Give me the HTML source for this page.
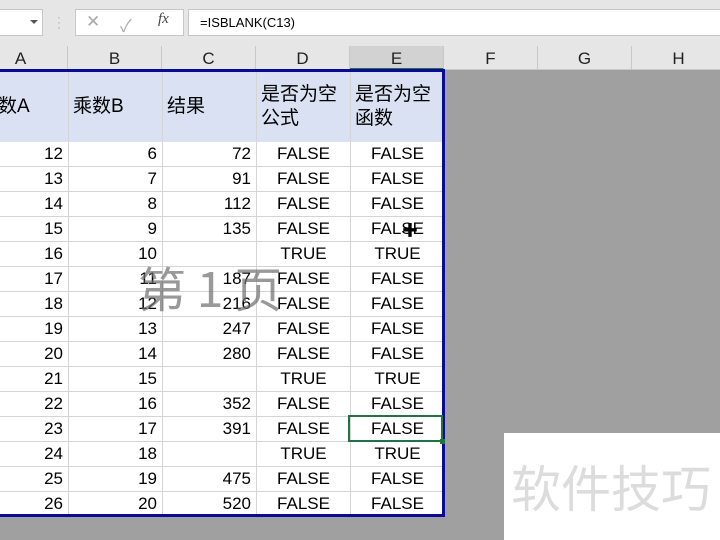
<!DOCTYPE html>
<html><head><meta charset="utf-8"><style>
*{margin:0;padding:0;box-sizing:border-box}
body{width:720px;height:540px;overflow:hidden;background:#a0a0a0;position:relative;font-family:"Liberation Sans","Noto Sans CJK SC",sans-serif;color:#000}
.a{position:absolute}
#bar{left:0;top:0;width:720px;height:46px;background:#e6e6e6}
.box{background:#fff;border:1px solid #c6c6c6}
#colh{left:0;top:46px;width:720px;height:24px;background:#e6e6e6;border-bottom:1px solid #c8c8c8}
.ch{position:absolute;top:46px;height:24px;font-size:17px;line-height:26px;text-align:center;color:#222;border-right:1px solid #c8c8c8}
table{position:absolute;left:-26px;top:71px;border-collapse:collapse;table-layout:fixed;background:#fff}
td{border:1px solid #d4d4d4;height:25px;font-size:17px;padding:0 5px;overflow:hidden;white-space:nowrap;line-height:24px}
td.r{text-align:right}td.c{text-align:center}
tr.h td{height:70px;background:#d9e1f2;font-size:19px;line-height:24px;white-space:normal;vertical-align:middle;border-color:#d9e1f2 #d4d4d4;padding-left:4px}
</style></head><body>
<div class="a" id="bar"></div>
<div class="a box" style="left:-2px;top:9px;width:45px;height:27px"></div>
<div class="a" style="left:30px;top:20px;width:0;height:0;border-left:4px solid transparent;border-right:4px solid transparent;border-top:4px solid #555"></div>
<div class="a" style="left:57px;top:15px;font-size:12px;color:#aaa;line-height:5px">·<br>·<br>·</div>
<div class="a box" style="left:75px;top:9px;width:109px;height:27px"></div>
<div class="a" style="left:86px;top:12px;font-size:17px;color:#aaa">✕</div>
<div class="a" style="left:120px;top:12px;font-size:17px;color:#aaa">✓</div>
<div class="a" style="left:158px;top:11px;font-size:15px;font-style:italic;font-family:'Liberation Serif',serif;color:#444">fx</div>
<div class="a box" style="left:188px;top:9px;width:540px;height:27px;font-size:13px;line-height:25px;padding-left:11px">=ISBLANK(C13)</div>
<div class="a" id="colh"></div>
<div class="ch" style="left:-26px;width:94px">A</div>
<div class="ch" style="left:68px;width:94px">B</div>
<div class="ch" style="left:162px;width:94px">C</div>
<div class="ch" style="left:256px;width:94px">D</div>
<div class="ch" style="left:350px;width:94px;background:#d2d2d2;border-bottom:2px solid #217346">E</div>
<div class="ch" style="left:444px;width:94px">F</div>
<div class="ch" style="left:538px;width:94px">G</div>
<div class="ch" style="left:632px;width:94px">H</div>
<table>
<colgroup><col style="width:94px"><col style="width:94px"><col style="width:94px"><col style="width:94px"><col style="width:94px"></colgroup>
<tr class="h"><td>乘数A</td><td>乘数B</td><td>结果</td><td>是否为空公式</td><td>是否为空函数</td></tr>
<tr><td class="r">12</td><td class="r">6</td><td class="r">72</td><td class="c">FALSE</td><td class="c">FALSE</td></tr>
<tr><td class="r">13</td><td class="r">7</td><td class="r">91</td><td class="c">FALSE</td><td class="c">FALSE</td></tr>
<tr><td class="r">14</td><td class="r">8</td><td class="r">112</td><td class="c">FALSE</td><td class="c">FALSE</td></tr>
<tr><td class="r">15</td><td class="r">9</td><td class="r">135</td><td class="c">FALSE</td><td class="c">FALSE</td></tr>
<tr><td class="r">16</td><td class="r">10</td><td class="r"></td><td class="c">TRUE</td><td class="c">TRUE</td></tr>
<tr><td class="r">17</td><td class="r">11</td><td class="r">187</td><td class="c">FALSE</td><td class="c">FALSE</td></tr>
<tr><td class="r">18</td><td class="r">12</td><td class="r">216</td><td class="c">FALSE</td><td class="c">FALSE</td></tr>
<tr><td class="r">19</td><td class="r">13</td><td class="r">247</td><td class="c">FALSE</td><td class="c">FALSE</td></tr>
<tr><td class="r">20</td><td class="r">14</td><td class="r">280</td><td class="c">FALSE</td><td class="c">FALSE</td></tr>
<tr><td class="r">21</td><td class="r">15</td><td class="r"></td><td class="c">TRUE</td><td class="c">TRUE</td></tr>
<tr><td class="r">22</td><td class="r">16</td><td class="r">352</td><td class="c">FALSE</td><td class="c">FALSE</td></tr>
<tr><td class="r">23</td><td class="r">17</td><td class="r">391</td><td class="c">FALSE</td><td class="c">FALSE</td></tr>
<tr><td class="r">24</td><td class="r">18</td><td class="r"></td><td class="c">TRUE</td><td class="c">TRUE</td></tr>
<tr><td class="r">25</td><td class="r">19</td><td class="r">475</td><td class="c">FALSE</td><td class="c">FALSE</td></tr>
<tr><td class="r">26</td><td class="r">20</td><td class="r">520</td><td class="c">FALSE</td><td class="c">FALSE</td></tr>
</table>
<div class="a" style="left:-10px;top:69px;width:455px;height:448px;border:3px solid #0a0a96"></div>
<div class="a" style="left:348px;top:415px;width:95px;height:27px;border:2px solid #217346"></div>
<div class="a" style="left:440px;top:439px;width:5px;height:5px;background:#217346"></div>
<div class="a" style="left:138px;top:256px;font-size:48px;color:rgba(110,110,110,0.7);line-height:60px;font-family:'Noto Sans CJK SC',sans-serif;white-space:nowrap">第 1 页</div>
<div class="a" style="left:402px;top:224px;font-size:16px;font-weight:bold;line-height:16px">✚</div>
<div class="a" style="left:504px;top:433px;width:216px;height:107px;background:#fff"></div>
<div class="a" style="left:511px;top:451px;font-size:50px;line-height:70px;color:#dcdcdc;font-family:'Noto Sans CJK SC',sans-serif;white-space:nowrap">软件技巧</div>
</body></html>
